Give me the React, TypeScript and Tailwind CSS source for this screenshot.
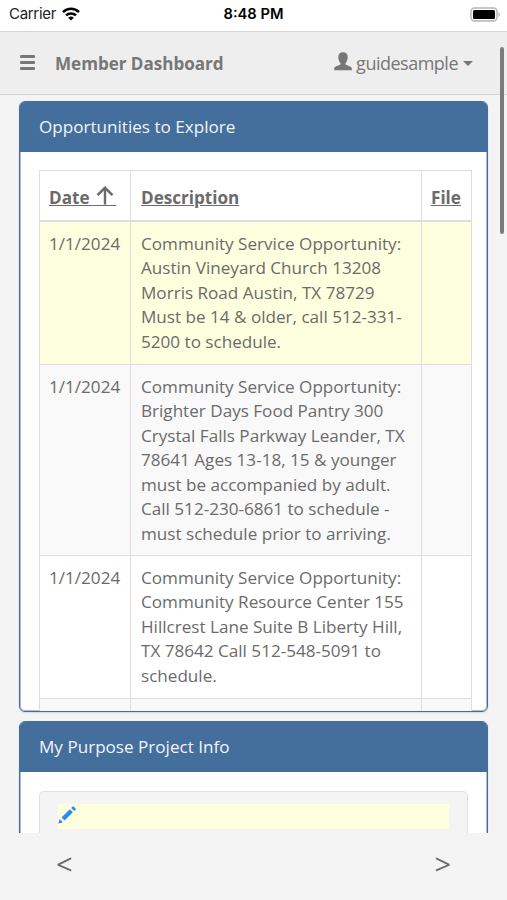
import type { ReactNode } from 'react'

const opportunities = [
  {
    date: '1/1/2024',
    rowClass: 'h-[143px] bg-[#feffdf]',
    lines: [
      'Community Service Opportunity:',
      'Austin Vineyard Church 13208',
      'Morris Road Austin, TX 78729',
      'Must be 14 & older, call 512-331-',
      '5200 to schedule.',
    ],
  },
  {
    date: '1/1/2024',
    rowClass: 'h-[191px] bg-[#f9f9f9]',
    lines: [
      'Community Service Opportunity:',
      'Brighter Days Food Pantry 300',
      'Crystal Falls Parkway Leander, TX',
      '78641 Ages 13-18, 15 & younger',
      'must be accompanied by adult.',
      'Call 512-230-6861 to schedule -',
      'must schedule prior to arriving.',
    ],
  },
  {
    date: '1/1/2024',
    rowClass: 'h-[143px] bg-white',
    lines: [
      'Community Service Opportunity:',
      'Community Resource Center 155',
      'Hillcrest Lane Suite B Liberty Hill,',
      'TX 78642 Call 512-548-5091 to',
      'schedule.',
    ],
  },
  { date: '', rowClass: 'h-[143px] bg-[#f9f9f9]', lines: [] },
]

const WifiIcon = () => (
  <svg width="18" height="14" viewBox="0 0 18 14" fill="none" stroke="#000" strokeWidth="2.5">
    <path d="M1 5.1a11.5 11.5 0 0 1 16 0" />
    <path d="M4 8.4a7.2 7.2 0 0 1 10 0" />
    <path d="M9 13.6 6.2 10.8a4 4 0 0 1 5.6 0Z" fill="#000" stroke="none" />
  </svg>
)

const BatteryIcon = () => (
  <svg width="31" height="15" viewBox="0 0 31 15">
    <rect x="1" y="1" width="26" height="13" rx="3.5" fill="#fff" stroke="#b5b5b5" strokeWidth="1.4" />
    <rect x="3" y="3" width="22" height="9" rx="1.5" fill="#000" />
    <path d="M28.4 5.2c1.8.6 1.8 4 0 4.6Z" fill="#b5b5b5" />
  </svg>
)

const UserIcon = () => (
  <svg className="-mt-[2px]" width="18" height="19" viewBox="0 0 18 19" fill="#777">
    <path d="M9 .3c3 0 4.7 1.900 4.700 4.800 0 2.300-.8 4.500-2 5.800-.5.6-.4 1.500.3 1.800l4.200 1.900c1 .5 1.600 1.100 1.600 2v1.700H.2v-1.700c0-.9.6-1.500 1.600-2L6 12.700c.7-.3.8-1.200.3-1.800-1.200-1.300-2-3.500-2-5.800C4.300 2.200 6 .3 9 .3Z" />
  </svg>
)

const PencilIcon = () => (
  <svg width="18" height="18" viewBox="0 0 18 18" fill="#2a8cf0">
    <path d="M13.200 1.900 14.300.8c.5-.5 1.100-.5 1.600 0l1.500 1.500c.5.5.5 1.100 0 1.600l-1.100 1.100Z" />
    <path d="M11.800 3.200 14.900 6.300 6.600 14.600 3.500 11.500Z" />
    <path d="M1.700 13.100 4.800 16.200.3 17.700Z" />
  </svg>
)

interface PanelProps {
  title: string
  className: string
  children: ReactNode
}

const Panel = ({ title, className, children }: PanelProps) => (
  <section className={`overflow-hidden rounded-[6px] border border-[#446e9b] bg-white shadow-[inset_0_0_0_1px_#a9bdd2,0_1px_2px_rgba(0,0,0,0.12)] ${className}`}>
    <h2 className="flex h-[50px] items-center bg-[#446e9b] pl-[19px] text-[#f1f5f9]">{title}</h2>
    {children}
  </section>
)

const App = () => {
  return (
    <div className="relative flex h-[900px] w-[507px] flex-col overflow-hidden bg-[#f4f4f4] font-['Open_Sans',sans-serif] text-[17.1px] leading-[24.45px] text-[#6b6b6b]">
      <div className="grid h-[31px] shrink-0 grid-cols-3 items-center bg-white pt-[2px] pr-[6px] pl-[9px] pb-[4px] font-['Inter',sans-serif] text-[15px] text-black">
        <div className="flex items-center gap-[6px] text-[#222]">
          <span className="tracking-[-0.3px]">Carrier</span>
          <WifiIcon />
        </div>
        <div className="pr-[3px] text-center font-semibold text-[14.7px]">8:48 PM</div>
        <div className="flex justify-end">
          <BatteryIcon />
        </div>
      </div>

      <header className="flex h-[64px] shrink-0 items-center border-y border-[#d5d5d5] bg-[#eee] pr-[34px] pl-[20px] text-[#777]">
        <div className="-mt-[2px] flex w-[15px] flex-col gap-[3px]">
          <div className="h-[3px] rounded-[1px] bg-[#777]" />
          <div className="h-[3px] rounded-[1px] bg-[#777]" />
          <div className="h-[3px] rounded-[1px] bg-[#777]" />
        </div>
        <h1 className="ml-[20px] pt-[2px] font-bold tracking-[-0.04px]">Member Dashboard</h1>
        <div className="ml-auto flex items-center">
          <UserIcon />
          <span className="ml-1 text-[18px] tracking-[-0.5px]">guidesample</span>
          <div className="ml-[5px] mt-[2px] border-x-[5px] border-t-[5px] border-x-transparent border-t-[#777]" />
        </div>
      </header>

      <main className="flex h-[738px] shrink-0 flex-col gap-[9px] overflow-hidden px-[19px] pt-[6px]">
        <Panel title="Opportunities to Explore" className="h-[611px] shrink-0">
          <div className="px-[19px] pt-[18px]">
            <table className="w-[433px] table-fixed border-separate border-spacing-0 border-t border-l border-[#ddd]">
              <colgroup>
                <col className="w-[91px]" />
                <col className="w-[291px]" />
                <col className="w-[50px]" />
              </colgroup>
              <thead>
                <tr className="h-[51px] text-left">
                  <th className="border-r border-b-2 border-[#ddd] pt-[6px] pl-[9px] font-bold whitespace-pre underline">
                    {'Date '}
                    <svg className="-mt-2 -mr-[20px] ml-[2px] inline" width="18" height="19" viewBox="0 0 18 19" fill="none" stroke="#6b6b6b" strokeWidth="2.4">
                      <path d="M9 18.500V2M1.500 9.200 9 1.800l7.500 7.400" />
                    </svg>
                    {'\u00a0\u00a0\u00a0\u00a0\u00a0'}
                  </th>
                  <th className="border-r border-b-2 border-[#ddd] pt-[6px] pl-[10px] font-bold underline">Description</th>
                  <th className="border-r border-b-2 border-[#ddd] pt-[6px] pl-[9px] font-bold underline">File</th>
                </tr>
              </thead>
              <tbody>
                {opportunities.map((item, i) => (
                  <tr key={i} className={item.rowClass}>
                    <td className="border-r border-b border-[#ddd] pt-[10px] pl-[9px] align-top">{item.date}</td>
                    <td className="border-r border-b border-[#ddd] pt-[10px] pl-[10px] align-top whitespace-nowrap">
                      {item.lines.map((line) => (
                        <div key={line}>{line}</div>
                      ))}
                    </td>
                    <td className="border-r border-b border-[#ddd]" />
                  </tr>
                ))}
              </tbody>
            </table>
          </div>
        </Panel>

        <Panel title="My Purpose Project Info" className="h-[200px] shrink-0">
          <div className="mx-[19px] mt-[19px] h-[120px] w-[429px] rounded-[5px] border border-[#e0e0e0] bg-[#f4f4f4] px-[18px] pt-[12px]">
            <div className="h-[25px] bg-[#feffdf] pt-[2px]">
              <PencilIcon />
            </div>
          </div>
        </Panel>
      </main>

      <footer className="flex flex-1 items-center justify-between px-[56px] pb-[4px] text-[29px]">
        <button>&lt;</button>
        <button>&gt;</button>
      </footer>

      <div className="absolute top-[47px] right-[3px] h-[187px] w-[4px] rounded-full bg-[#7c7c7c]" />
    </div>
  )
}

export default App
